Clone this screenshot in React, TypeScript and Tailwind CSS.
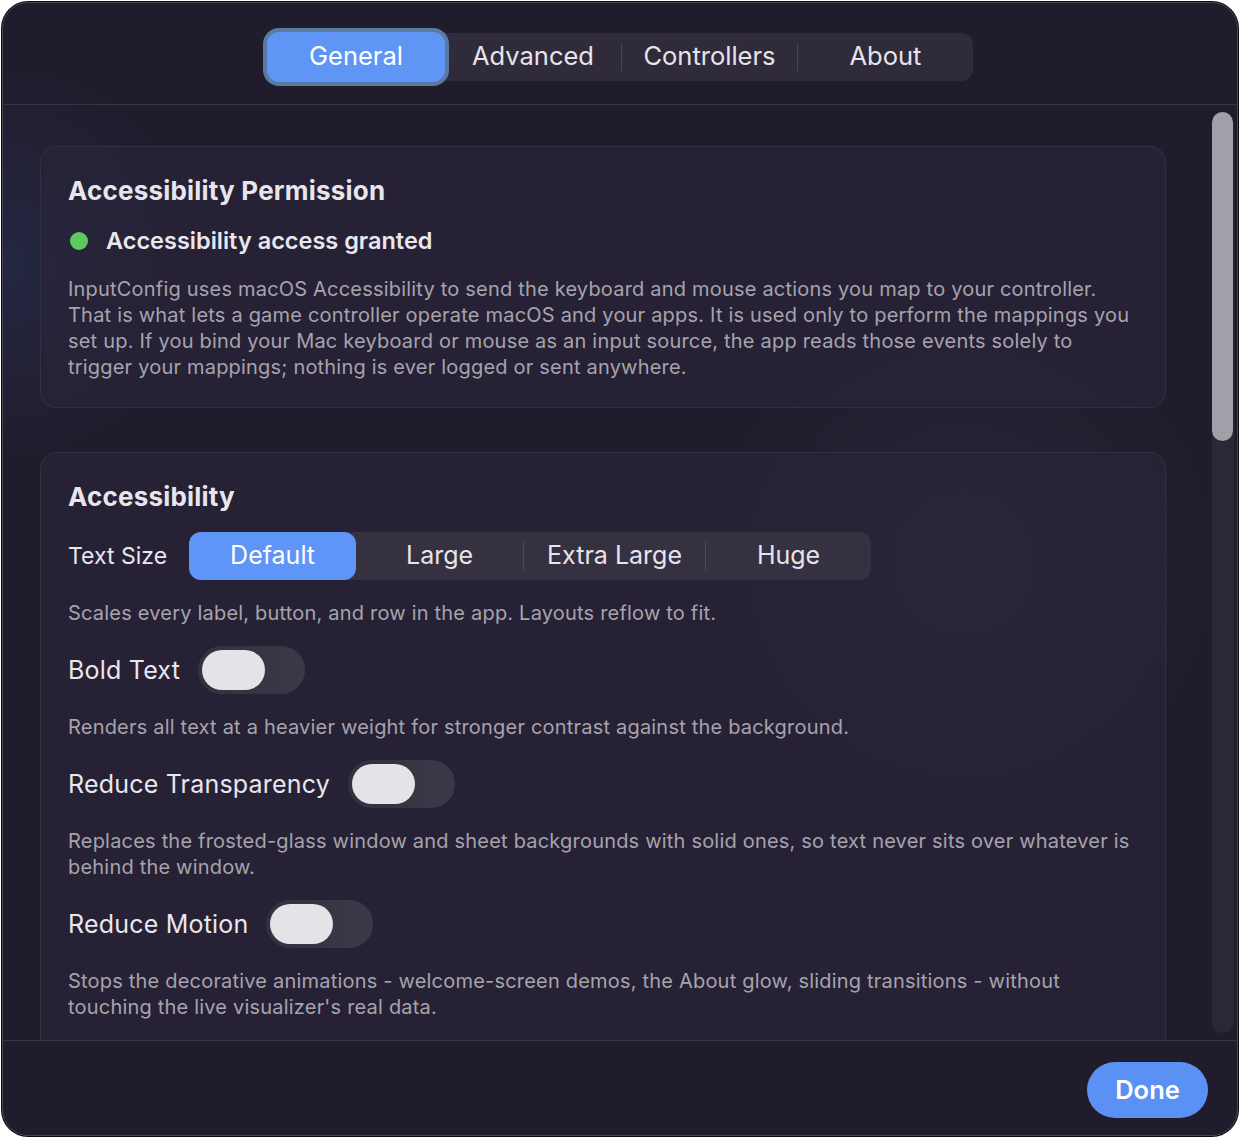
const tabs = [
  { label: 'General', w: 'w-[178px]' },
  { label: 'Advanced', w: 'w-[176px]' },
  { label: 'Controllers', w: 'w-[175px]' },
  { label: 'About', w: 'w-[175px]' },
]

const sizes = [
  { label: 'Default', w: 'w-[167px]' },
  { label: 'Large', w: 'w-[167px]' },
  { label: 'Extra Large', w: 'w-[181px]' },
  { label: 'Huge', w: 'w-[165px]' },
]

function Toggle() {
  return (
    <div className="flex h-[48px] w-[107px] items-center rounded-full bg-gradient-to-r from-[#34303f] to-[#3d3848] px-[4px]">
      <div className="h-[40px] w-[63px] rounded-full bg-[#e4e3e8]" />
    </div>
  )
}

function ToggleRow({ label }: { label: string }) {
  return (
    <div className="flex items-center gap-[18px]">
      <span className="text-[25px] leading-[32px] tracking-[0.2px] text-[#e9e7ed]">{label}</span>
      <Toggle />
    </div>
  )
}

function Caption({ children }: { children: React.ReactNode }) {
  return <p className="text-[20px] leading-[26px] tracking-[0.2px] text-[#a7a3ad]">{children}</p>
}

export default function App() {
  return (
    <div
      className="min-h-screen bg-white p-[2px]"
      style={{ fontFamily: 'Inter, "Noto Sans", sans-serif' }}
    >
      <div className="flex h-[1134px] w-[1236px] flex-col overflow-hidden rounded-[26px] border border-[#4a4555] bg-[#211c2c] bg-[radial-gradient(circle_at_960px_560px,rgba(60,55,78,0.35),transparent_260px),radial-gradient(circle_at_0px_260px,rgba(40,60,110,0.35),transparent_200px)] shadow-[0_0_0_1px_#0c0a12]">
        {/* header tabs */}
        <div className="flex h-[102px] shrink-0 items-center justify-center border-b border-[#3a3545] pt-[6px]">
          <div className="flex h-[48px] items-center rounded-xl bg-[#302b3b]">
            {tabs.map((t, i) => (
              <div key={t.label} className="flex items-center">
                {i > 1 && <div className="h-[28px] w-px bg-[#4a4556]" />}
                {i === 0 ? (
                  <div
                    className={`${t.w} -my-px flex h-[50px] items-center justify-center rounded-xl bg-[#5f95f5] text-[25.5px] text-white ring-4 ring-[#5b7aa1]`}
                  >
                    {t.label}
                  </div>
                ) : (
                  <div
                    className={`${t.w} flex h-[48px] items-center justify-center text-[25.5px] text-[#e6e4ea]`}
                  >
                    {t.label}
                  </div>
                )}
              </div>
            ))}
          </div>
        </div>

        {/* scroll area */}
        <div className="flex min-h-0 flex-1">
          <div className="flex w-[1163px] shrink-0 flex-col gap-[44px] overflow-hidden pl-[37px] pt-[41px]">
            <section className="w-[1126px] shrink-0 rounded-2xl border border-[#34303f] bg-[#29243a]/60 px-[27px] pb-[27px] pt-[28px]">
              <h2 className="text-[26px] font-bold leading-[32px] tracking-[0.2px] text-[#e8e6ec]">
                Accessibility Permission
              </h2>
              <div className="mt-[18px] flex items-center gap-[18px] pl-[2px]">
                <div className="h-[18px] w-[18px] rounded-full bg-[#5ec95f]" />
                <span className="text-[23.5px] font-semibold leading-[32px] text-[#e9e7ed]">
                  Accessibility access granted
                </span>
              </div>
              <p className="mt-[19px] text-[20px] leading-[26px] tracking-[0.2px] text-[#a7a3ad]">
                InputConfig uses macOS Accessibility to send the keyboard and mouse actions you map to your
                controller. That is what lets a game controller operate macOS and your apps. It is used only to
                perform the mappings you set up. If you bind your Mac keyboard or mouse as an input source, the app
                reads those events solely to trigger your mappings; nothing is ever logged or sent anywhere.
              </p>
            </section>

            <section className="flex w-[1126px] shrink-0 flex-col gap-[20px] rounded-2xl border border-[#34303f] bg-[#29243a]/60 px-[27px] pb-[40px] pt-[28px]">
              <h2 className="mb-[-1px] text-[26px] font-bold leading-[32px] tracking-[0.2px] text-[#e8e6ec]">
                Accessibility
              </h2>
              <div className="flex items-center gap-[22px]">
                <span className="text-[23px] leading-[32px] text-[#e9e7ed]">Text Size</span>
                <div className="flex h-[48px] items-center rounded-xl bg-[#363141]">
                  {sizes.map((s, i) => (
                    <div key={s.label} className="flex items-center">
                      {i > 1 && <div className="h-[28px] w-px bg-[#4c4757]" />}
                      <div
                        className={`${s.w} flex h-[48px] items-center justify-center rounded-xl text-[25px] ${
                          i === 0 ? 'bg-[#5f95f7] text-white' : 'text-[#e6e4ea]'
                        }`}
                      >
                        {s.label}
                      </div>
                    </div>
                  ))}
                </div>
              </div>
              <Caption>Scales every label, button, and row in the app. Layouts reflow to fit.</Caption>
              <ToggleRow label="Bold Text" />
              <Caption>Renders all text at a heavier weight for stronger contrast against the background.</Caption>
              <ToggleRow label="Reduce Transparency" />
              <Caption>
                Replaces the frosted-glass window and sheet backgrounds with solid ones, so text never sits over
                whatever is behind the window.
              </Caption>
              <ToggleRow label="Reduce Motion" />
              <Caption>
                Stops the decorative animations - welcome-screen demos, the About glow, sliding transitions - without
                touching the live visualizer's real data.
              </Caption>
            </section>
          </div>

          <div className="ml-[46px] mt-[7px] mb-[7px] flex w-[22px] flex-col rounded-full bg-[#2b2737]">
            <div className="h-[329px] w-[21px] rounded-full bg-[#a19fa8]" />
          </div>
        </div>

        {/* footer */}
        <div className="flex h-[95px] shrink-0 items-center justify-end border-t border-[#3a3545] pr-[29px] pt-[4px]">
          <button className="h-[56px] w-[121px] rounded-full bg-[#5b91f5] text-[25.5px] font-semibold text-white">
            Done
          </button>
        </div>
      </div>
    </div>
  )
}
